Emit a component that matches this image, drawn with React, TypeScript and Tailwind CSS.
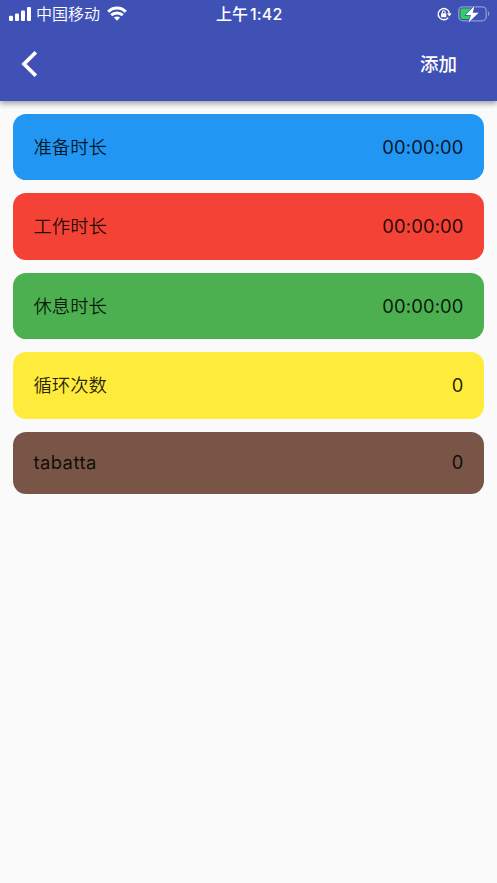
import React from "react";

type Row = { label: string; value: string; color: string; height: string; labelStyle: string };

const rows: Row[] = [
  { label: "准备时长", value: "00:00:00", color: "bg-[#2196f3]", height: "h-[66.3px]", labelStyle: "font-[350]" },
  { label: "工作时长", value: "00:00:00", color: "bg-[#f44336]", height: "h-[66.3px]", labelStyle: "font-[350]" },
  { label: "休息时长", value: "00:00:00", color: "bg-[#4caf50]", height: "h-[66.3px]", labelStyle: "font-[350]" },
  { label: "循环次数", value: "0", color: "bg-[#ffeb3b]", height: "h-[66.3px]", labelStyle: "font-[350]" },
  { label: "tabatta", value: "0", color: "bg-[#795548]", height: "h-[62.3px] pb-[2px]", labelStyle: "font-normal tracking-[0.45px]" },
];

function SignalIcon() {
  return (
    <svg width="22" height="14" viewBox="0 0 22 14" fill="currentColor">
      <rect x="0" y="8.8" width="4" height="5.2" rx="1.1" />
      <rect x="6" y="6.5" width="4" height="7.5" rx="1.1" />
      <rect x="12" y="3.4" width="4" height="10.6" rx="1.1" />
      <rect x="18" y="0" width="4" height="14" rx="1.1" />
    </svg>
  );
}

function WifiIcon() {
  return (
    <svg width="20" height="15" viewBox="0 0 20 15" fill="none" stroke="currentColor" strokeWidth="3">
      <path d="M1.2 5.8C6 .7 14 .7 18.8 5.8" />
      <path d="M4.2 9.2C7.5 6.1 12.5 6.1 15.8 9.2" />
      <path d="M10 14.8 6.9 11.6C8.6 10.1 11.4 10.1 13.1 11.6Z" fill="currentColor" stroke="none" />
    </svg>
  );
}

function RotationLockIcon() {
  return (
    <svg width="15" height="14" viewBox="0 0 15 14" fill="none" stroke="currentColor">
      <path d="M11.2 10.7A5.6 5.6 0 1 1 12.3 6" strokeWidth="1.4" />
      <path d="M9.9 6.2h4.8L12.4 9.5Z" fill="currentColor" stroke="none" />
      <rect x="4.1" y="6.2" width="5.2" height="4" rx=".6" fill="currentColor" stroke="none" />
      <path d="M5.3 6.5V5.2a1.4 1.4 0 0 1 2.8 0v1.3" strokeWidth="1.1" />
    </svg>
  );
}

function BatteryIcon() {
  return (
    <svg width="32" height="18" viewBox="0 0 32 18">
      <rect x=".8" y="1.8" width="27.4" height="14" rx="4" fill="none" stroke="#8f99d3" strokeWidth="1.3" />
      <path d="M30 6.3c1.8.8 1.8 4.2 0 5Z" fill="#8f99d3" />
      <path d="M4.5 3.6H13V14H4.5A2 2 0 0 1 2.5 12V5.6A2 2 0 0 1 4.5 3.6Z" fill="#30d158" />
      <path d="M16.6 .7 7.7 10h5.300l-2.600 7.700 10.200-10h-5.900Z" fill="#fff" stroke="#3f51b5" strokeWidth="1.3" paintOrder="stroke" />
    </svg>
  );
}

export default function App() {
  return (
    <div className="min-h-[883px] w-full bg-[#fafafa] font-['Inter','Noto_Sans_CJK_SC',sans-serif]">
      <header className="relative h-[101px] bg-[#3f51b5] text-white shadow-[0_3px_5px_rgba(0,0,0,0.33)]">
        <div className="grid h-[27px] grid-cols-3 items-center pl-[9px] pr-[7.5px] text-[16px] leading-none">
          <div className="flex items-center">
            <SignalIcon />
            <span className="ml-[5px] font-[350]">中国移动</span>
            <span className="ml-[6.5px]"><WifiIcon /></span>
          </div>
          <div className="flex items-center justify-center gap-[2px] font-medium">
            <span>上午</span>
            <span className="tracking-[0.2px]">1:42</span>
          </div>
          <div className="flex items-center justify-end gap-[5.5px]">
            <RotationLockIcon />
            <BatteryIcon />
          </div>
        </div>
        <div className="flex h-[74px] items-center justify-between pl-[21px] pr-10">
          <svg width="16" height="26" viewBox="0 0 16 26" fill="none" stroke="currentColor" strokeWidth="3.7">
            <path d="M14.8 1.4 3 13l11.8 11.6" />
          </svg>
          <button className="text-[18.5px] leading-none font-medium">添加</button>
        </div>
      </header>
      <main className="flex flex-col gap-[13.2px] px-[13.4px] pt-[13px]">
        {rows.map((row) => (
          <div
            key={row.label}
            className={`flex items-center justify-between rounded-[13.2px] px-5 text-[18.4px] leading-none text-black/87 ${row.color} ${row.height}`}
          >
            <span className={row.labelStyle}>{row.label}</span>
            <span className="font-normal tracking-[0.15px]">{row.value}</span>
          </div>
        ))}
      </main>
    </div>
  );
}
